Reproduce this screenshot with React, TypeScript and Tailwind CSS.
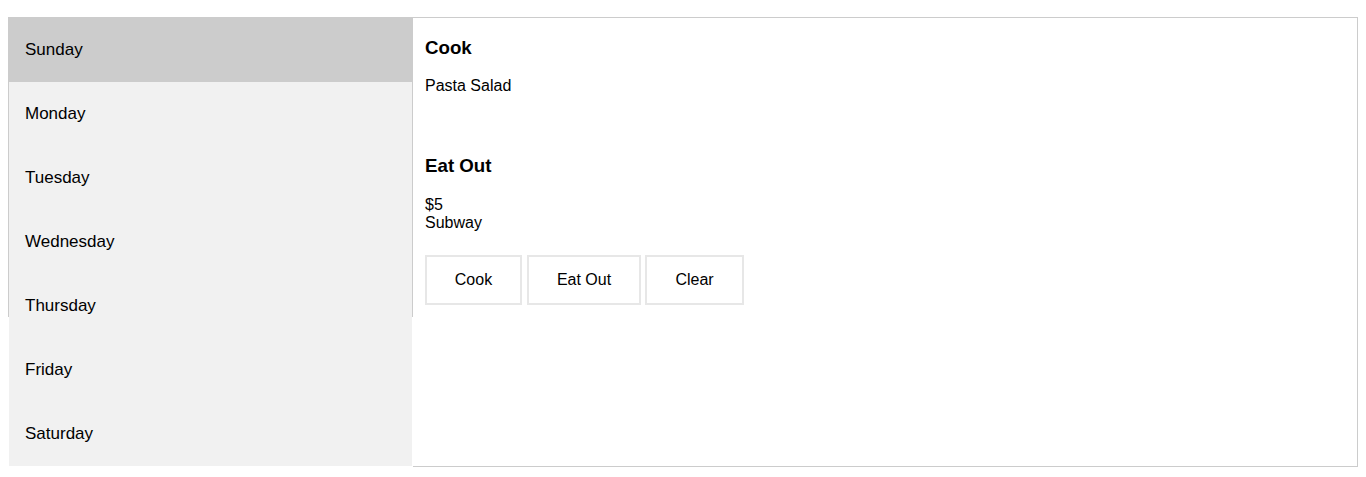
import { useState } from "react";

const days = ["Sunday", "Monday", "Tuesday", "Wednesday", "Thursday", "Friday", "Saturday"];

export default function App() {
  const [active, setActive] = useState("Sunday");

  return (
    <div className="min-h-screen bg-white px-2 pt-[17px] font-['Liberation_Sans',Arial,sans-serif] text-black">
      <div className="flex items-start">
        {/* tab list: fixed height, buttons overflow below like the original */}
        <div className="h-[300px] w-[405px] shrink-0 border border-[#ccc] bg-[#f1f1f1]">
          {days.map((day) => (
            <button
              key={day}
              onClick={() => setActive(day)}
              className={`block h-[64px] w-full px-4 text-left text-[17px] leading-[20px] ${
                active === day ? "bg-[#ccc]" : "bg-[#f1f1f1]"
              }`}
            >
              {day}
            </button>
          ))}
        </div>

        <div className="h-[450px] w-[945px] shrink-0 border border-l-0 border-[#ccc] px-3">
          <h3 className="mt-[19px] text-[18.72px] font-bold leading-[21.5px]">Cook</h3>
          <p className="mt-[18px] text-base leading-[18.4px]">Pasta Salad</p>

          <h3 className="mt-[60px] text-[18.72px] font-bold leading-[21.5px]">Eat Out</h3>
          <div className="mt-[20px] text-base leading-[18px]">
            <p>$5</p>
            <p>Subway</p>
          </div>

          <div className="mt-[23px] flex">
            <button className="h-[50px] w-[97px] border-2 border-[#e7e7e7] bg-white text-base leading-[18px]">
              Cook
            </button>
            <button className="ml-[5px] h-[50px] w-[114px] border-2 border-[#e7e7e7] bg-white text-base leading-[18px]">
              Eat Out
            </button>
            <button className="ml-[4px] h-[50px] w-[99px] border-2 border-[#e7e7e7] bg-white text-base leading-[18px]">
              Clear
            </button>
          </div>
        </div>
      </div>
    </div>
  );
}
